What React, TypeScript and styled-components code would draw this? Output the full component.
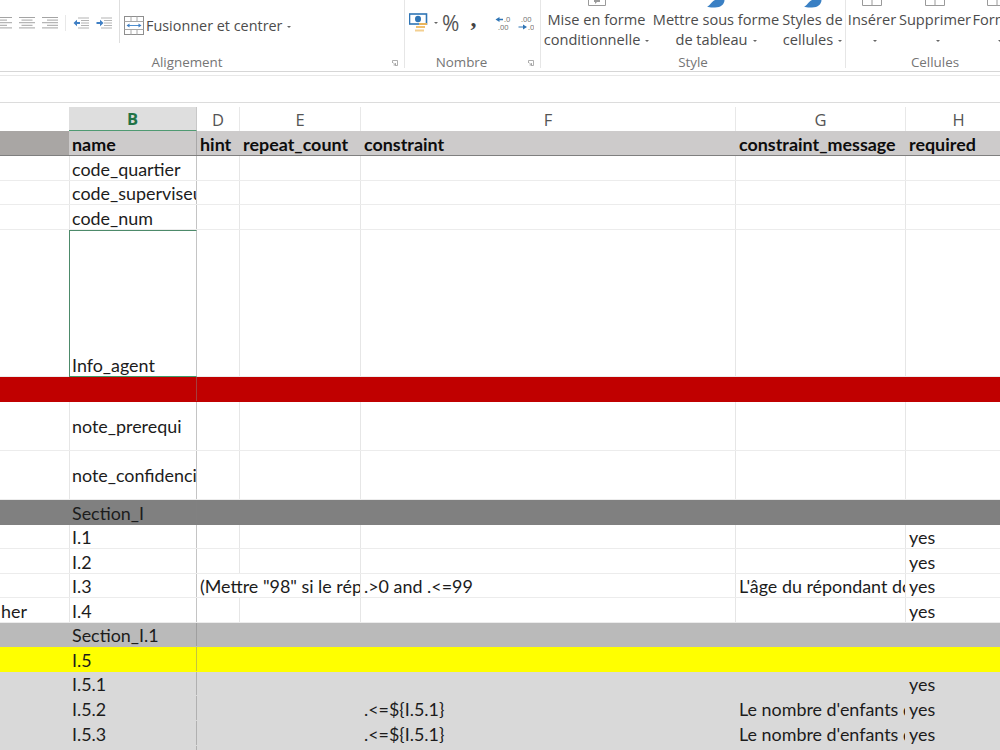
import React from "react"
import styled, { createGlobalStyle } from "styled-components"

const GlobalStyle = createGlobalStyle`
  html, body {
    margin: 0;
    padding: 0;
    background: #fff;
    overflow: hidden;
  }
`

const Page = styled.div`
  width: 1000px;
  height: 750px;
  overflow: hidden;
  background: #fff;
  display: flex;
  flex-direction: column;
`

const Ribbon = styled.div`
  height: 71px;
  flex: none;
  display: flex;
  border-bottom: 1px solid #d6d6d6;
  font-family: "Open Sans", sans-serif;
  color: #4c4c4c;
  overflow: hidden;
`

const Group = styled.div<{ $w: number; $last?: boolean }>`
  width: ${(p) => p.$w}px;
  flex: none;
  height: 68px;
  display: flex;
  flex-direction: column;
  box-sizing: border-box;
  border-right: ${(p) => (p.$last ? "none" : "1px solid #e6e6e6")};
`

const GroupBody = styled.div`
  height: 52px;
  flex: none;
  display: flex;
  align-items: flex-start;
  overflow: hidden;
`

const GroupLabel = styled.div<{ $inset?: number }>`
  height: 18px;
  line-height: 18px;
  margin-top: 1px;
  padding-right: ${(p) => p.$inset ?? 0}px;
  font-size: 13.4px;
  color: #757575;
  text-align: center;
  position: relative;
`

const Launcher = styled.svg`
  position: absolute;
  right: 6px;
  top: 7px;
  width: 6px;
  height: 6px;
`

const IconRow = styled.div<{ $pad: number; $gap: number }>`
  display: flex;
  align-items: center;
  gap: ${(p) => p.$gap}px;
  margin-left: ${(p) => p.$pad}px;
  height: 46px;
`

const Divider = styled.div`
  width: 1px;
  height: 16px;
  background: #e8e8e8;
`

const TallDivider = styled.div`
  width: 1px;
  height: 43px;
  background: #dedede;
  margin-left: 7px;
`

const MergeButton = styled.div`
  display: flex;
  align-items: center;
  gap: 2px;
  height: 50px;
  margin-left: 4px;
  font-size: 14.4px;
  color: #4c4c4c;
  white-space: nowrap;
`

const Caret = styled.span`
  display: inline-block;
  width: 0;
  height: 0;
  margin-left: 5px;
  vertical-align: middle;
  border-left: 2px solid transparent;
  border-right: 2px solid transparent;
  border-top: 2px solid #666;
`

const Percent = styled.span`
  font-size: 21px;
  color: #555;
  line-height: 1;
  margin-left: 4px;
`

const Comma = styled.span`
  font-family: "Liberation Serif", serif;
  font-weight: 700;
  font-size: 24px;
  color: #444;
  line-height: 1;
  margin-top: -10px;
  margin-left: 11px;
`

const Spacer = styled.span<{ $w: number }>`
  width: ${(p) => p.$w}px;
`

const RibbonButton = styled.div<{ $w: number }>`
  width: ${(p) => p.$w}px;
  flex: none;
  position: relative;
  padding-top: 9px;
  text-align: center;
  font-size: 14.6px;
  line-height: 20px;
  white-space: nowrap;
  color: #4c4c4c;
`

const ButtonTop = styled.svg`
  position: absolute;
  top: 0;
  left: 50%;
  transform: translateX(-50%);
  overflow: visible;
`

const FormulaBar = styled.div`
  height: 26px;
  flex: none;
  margin-top: 3px;
  border-top: 1px solid #e8e8e8;
  border-bottom: 1px solid #dcdcdc;
`

const Sheet = styled.div`
  flex: 1;
  font-family: Lato, "Open Sans", sans-serif;
  font-size: 17.9px;
  color: #1c1c1c;
  overflow: hidden;
`

const COLUMNS = "69px 128px 43px 121px 375px 170px 106px"

const ColumnHeaders = styled.div`
  display: grid;
  grid-template-columns: ${COLUMNS};
  height: 24px;
  padding-top: 4px;
  font-family: "Open Sans", sans-serif;
  font-size: 16.5px;
  color: #555;
`

const ColumnHead = styled.div<{ $active?: boolean; $blank?: boolean }>`
  display: flex;
  align-items: center;
  justify-content: center;
  box-sizing: border-box;
  border-right: 1px solid ${(p) => (p.$blank ? "transparent" : p.$active ? "#c8c8c8" : "#e8e8e8")};
  background: ${(p) => (p.$active ? "#dedede" : "transparent")};
  border-bottom: ${(p) => (p.$active ? "1.5px solid #4f9a72" : "none")};
  color: ${(p) => (p.$active ? "#217346" : "#555")};
  font-weight: ${(p) => (p.$active ? 700 : 400)};
`

const Row = styled.div<{ $h: number; $fill?: string; $line?: string }>`
  display: grid;
  grid-template-columns: ${COLUMNS};
  height: ${(p) => p.$h}px;
  box-sizing: border-box;
  background: ${(p) => p.$fill ?? "#fff"};
  border-bottom: 1px solid ${(p) => p.$line ?? "#ececec"};
`

const Cell = styled.div<{ $sep?: string; $span?: number }>`
  box-sizing: border-box;
  min-width: 0;
  overflow: hidden;
  white-space: nowrap;
  padding: 0 0 1px 3px;
  display: flex;
  align-items: flex-end;
  line-height: 20px;
  border-right: 1px solid ${(p) => p.$sep ?? "transparent"};
  ${(p) => (p.$span ? `grid-column: span ${p.$span};` : "")}
`

const LeadCell = styled(Cell)<{ $fill?: string }>`
  padding-left: 1px;
  background: ${(p) => p.$fill ?? "transparent"};
`

const NameCell = styled(Cell)<{ $leftLine: string; $selected?: boolean; $middle?: boolean }>`
  padding-left: 2px;
  border-left: 1px solid ${(p) => (p.$selected ? "#4d8a6a" : p.$leftLine)};
  align-items: ${(p) => (p.$middle ? "center" : "flex-end")};
  ${(p) =>
    p.$selected
      ? `
    border-top: 1px solid #4d8a6a;
    border-bottom: 1px solid #3f9a6a;
    margin-bottom: -1px;
  `
      : ""}
`

const HeaderText = styled.span`
  font-weight: 700;
  color: #0d0d0d;
`

type RowDef = {
  h: number
  fill?: string
  line?: string
  grid?: boolean
  bold?: boolean
  middle?: boolean
  a?: string
  b?: string
  d?: string
  spanHint?: boolean
  e?: string
  f?: string
  g?: string
  hh?: string
  selected?: boolean
  aFill?: string
}

const plain = { grid: true }
const LIGHT = "#d9d9d9"
const COLUMN_B_EDGE = "rgba(130, 130, 130, 0.47)"

const rows: RowDef[] = [
  { h: 25, fill: "#cdcbcb", line: "#7f7f7f", bold: true, aFill: "#a9a6a4", b: "name", d: "hint", e: "repeat_count", f: "constraint", g: "constraint_message", hh: "required" },
  { h: 25, ...plain, b: "code_quartier" },
  { h: 24, ...plain, b: "code_superviseu" },
  { h: 25, ...plain, b: "code_num" },
  { h: 147, ...plain, b: "Info_agent", selected: true },
  { h: 25, fill: "#c00000", line: "#c00000" },
  { h: 49, ...plain, middle: true, b: "note_prerequi" },
  { h: 49, ...plain, middle: true, b: "note_confidenci" },
  { h: 25, fill: "#808080", line: "#808080", b: "Section_I" },
  { h: 24, ...plain, b: "I.1", hh: "yes" },
  { h: 25, ...plain, b: "I.2", hh: "yes" },
  { h: 24, ...plain, b: "I.3", d: '(Mettre "98" si le rép', spanHint: true, f: ".>0 and .<=99", g: "L'âge du répondant do", hh: "yes" },
  { h: 25, ...plain, a: "her", b: "I.4", hh: "yes" },
  { h: 24, fill: "#bababa", line: "#bababa", b: "Section_I.1" },
  { h: 25, fill: "#ffff00", line: "#ffff00", b: "I.5" },
  { h: 24, fill: LIGHT, line: LIGHT, b: "I.5.1", hh: "yes" },
  { h: 25, fill: LIGHT, line: LIGHT, b: "I.5.2", f: ".<=${I.5.1}", g: "Le nombre d'enfants d", hh: "yes" },
  { h: 25, fill: LIGHT, line: LIGHT, b: "I.5.3", f: ".<=${I.5.1}", g: "Le nombre d'enfants d", hh: "yes" },
  { h: 8, fill: LIGHT, line: LIGHT },
]

const AlignIcon = ({ align }: { align: "left" | "center" | "right" }) => {
  const lines = [16, 11, 16, 11, 16]
  return (
    <svg width="16" height="14" viewBox="0 0 16 14">
      {lines.map((w, i) => {
        const x = align === "left" ? 0 : align === "right" ? 16 - w : (16 - w) / 2
        return <rect key={i} x={x} y={1 + i * 2.6} width={w} height="1" fill="#a4a4a4" />
      })}
    </svg>
  )
}

const IndentIcon = ({ out }: { out?: boolean }) => (
  <svg width="16" height="12" viewBox="0 0 16 12">
    {[1, 3.5, 6, 8.5, 11].map((y, i) => (
      <rect key={i} x={i === 0 || i === 4 ? 5 : 8} y={y - 0.5} width={i === 0 || i === 4 ? 11 : 8} height="1" fill="#b4b4b4" />
    ))}
    {out ? (
      <path d="M0.5 6 L4 2.8 V5 H7 V7 H4 V9.2 Z" fill="#3f7fc4" />
    ) : (
      <path d="M7.5 6 L4 2.8 V5 H0.5 V7 H4 V9.2 Z" fill="#3f7fc4" />
    )}
  </svg>
)

const MergeIcon = () => (
  <svg width="20" height="19" viewBox="0 0 20 19">
    <rect x="0.5" y="0.5" width="19" height="18" fill="#fff" stroke="#8e8e8e" />
    <path d="M0.5 5.5 H19.5 M0.5 13.5 H19.5 M7 0.5 V5.5 M13 0.5 V5.5 M7 13.5 V18.5 M13 13.5 V18.5" stroke="#a8a8a8" />
    <path d="M3 9.5 H17" stroke="#4f8fd0" />
    <path d="M5.5 7.5 L2.5 9.5 L5.5 11.5 Z M14.5 7.5 L17.5 9.5 L14.5 11.5 Z" fill="#3f7fc4" />
  </svg>
)

const CurrencyIcon = () => (
  <svg width="20" height="20" viewBox="0 0 20 20">
    <rect x="0.5" y="1" width="17" height="10" fill="#fff" stroke="#2f75b5" strokeWidth="1.6" />
    <ellipse cx="9" cy="6" rx="3" ry="3.2" fill="#2f75b5" />
    <rect x="10" y="10" width="8" height="2" fill="#e8b45c" />
    <rect x="7" y="13" width="9" height="2" fill="#f0c070" />
    <rect x="6" y="16.5" width="9" height="2" fill="#f3cf90" />
  </svg>
)

const DecimalIcon = ({ more }: { more?: boolean }) => (
  <svg width="16" height="16" viewBox="0 0 16 16">
    {more ? (
      <>
        <text x="3" y="6.5" fontSize="7.5" fill="#707070" fontFamily="Open Sans">.00</text>
        <path d="M0.5 11.5 H5 V9.5 L9 12 L5 14.5 V12.5 H0.5 Z" fill="#2f75b5" />
        <text x="10" y="15" fontSize="7.5" fill="#707070" fontFamily="Open Sans">.0</text>
      </>
    ) : (
      <>
        <path d="M0.5 4.5 L4.5 2 V3.8 H8 V5.2 H4.5 V7 Z" fill="#2f75b5" />
        <text x="9" y="7" fontSize="7.5" fill="#707070" fontFamily="Open Sans">.0</text>
        <text x="3" y="15" fontSize="7.5" fill="#707070" fontFamily="Open Sans">.00</text>
      </>
    )}
  </svg>
)

const LauncherIcon = () => (
  <Launcher viewBox="0 0 6 6">
    <path d="M0.5 3 V0.5 H5.5 V5.5 H3" fill="none" stroke="#9a9a9a" strokeWidth="0.8" />
    <path d="M1 2.5 L3.5 5 M3.5 3 V5 H1.5" fill="none" stroke="#9a9a9a" strokeWidth="0.8" />
  </Launcher>
)

const BrushTop = () => (
  <ButtonTop width="18" height="8" viewBox="0 0 18 8">
    <path d="M0 6.5 C3 6 4 2 8 0 H17.5 C17.5 4 14 7.5 8 7.5 C5 7.8 2 7.5 0 6.5 Z" fill="#3a80c4" />
  </ButtonTop>
)

const BoxTop = () => (
  <ButtonTop width="20" height="6" viewBox="0 0 20 6">
    <path d="M0.5 0 V5.5 H19.5 V0 M10 0 V5.5" fill="none" stroke="#9a9a9a" />
  </ButtonTop>
)

const CondTop = () => (
  <ButtonTop width="18" height="6" viewBox="0 0 18 6">
    <path d="M0.5 0 V5.5 H17.5 V0" fill="none" stroke="#9a9a9a" />
    <path d="M6 0 H12 V2 H9 L7 4 V2 H6 Z" fill="#9a9a9a" />
  </ButtonTop>
)

const SheetRow = ({ row }: { row: RowDef }) => {
  const sep = row.grid ? "#e6e6e6" : "transparent"
  const Text = row.bold ? HeaderText : React.Fragment
  return (
    <Row $h={row.h} $fill={row.fill} $line={row.line}>
      <LeadCell $fill={row.aFill}>{row.a}</LeadCell>
      <NameCell $leftLine={sep} $sep={COLUMN_B_EDGE} $selected={row.selected} $middle={row.middle}>
        <Text>{row.b}</Text>
      </NameCell>
      <Cell $sep={sep} $span={row.spanHint ? 2 : undefined}>
        <Text>{row.d}</Text>
      </Cell>
      {!row.spanHint && (
        <Cell $sep={sep}>
          <Text>{row.e}</Text>
        </Cell>
      )}
      <Cell $sep={sep}>
        <Text>{row.f}</Text>
      </Cell>
      <Cell $sep={sep}>
        <Text>{row.g}</Text>
      </Cell>
      <Cell>
        <Text>{row.hh}</Text>
      </Cell>
    </Row>
  )
}

export default function App() {
  return (
    <Page>
      <GlobalStyle />
      <Ribbon>
        <Group $w={405}>
          <GroupBody>
            <IconRow $pad={-4} $gap={7}>
              <AlignIcon align="left" />
              <AlignIcon align="center" />
              <AlignIcon align="right" />
              <Divider />
              <IndentIcon out />
              <IndentIcon />
            </IconRow>
            <TallDivider />
            <MergeButton>
              <MergeIcon />
              <span>
                Fusionner et centrer
                <Caret />
              </span>
            </MergeButton>
          </GroupBody>
          <GroupLabel $inset={30}>
            Alignement
            <LauncherIcon />
          </GroupLabel>
        </Group>
        <Group $w={136}>
          <GroupBody>
            <IconRow $pad={4} $gap={0}>
              <CurrencyIcon />
              <Caret />
              <Percent>%</Percent>
              <Comma>,</Comma>
              <Spacer $w={19} />
              <DecimalIcon />
              <Spacer $w={7} />
              <DecimalIcon more />
            </IconRow>
          </GroupBody>
          <GroupLabel $inset={22}>
            Nombre
            <LauncherIcon />
          </GroupLabel>
        </Group>
        <Group $w={305}>
          <GroupBody>
            <RibbonButton $w={111}>
              <CondTop />
              Mise en forme
              <br />
              conditionnelle
              <Caret />
            </RibbonButton>
            <RibbonButton $w={128}>
              <BrushTop />
              Mettre sous forme
              <br />
              de tableau
              <Caret />
            </RibbonButton>
            <RibbonButton $w={65}>
              <BrushTop />
              Styles de
              <br />
              cellules
              <Caret />
            </RibbonButton>
          </GroupBody>
          <GroupLabel>Style</GroupLabel>
        </Group>
        <Group $w={178} $last>
          <GroupBody>
            <RibbonButton $w={52}>
              <BoxTop />
              Insérer
              <br />
              <Caret />
            </RibbonButton>
            <RibbonButton $w={74}>
              <BoxTop />
              Supprimer
              <br />
              <Caret />
            </RibbonButton>
            <RibbonButton $w={50}>
              <BoxTop />
              Format
              <br />
              <Caret />
            </RibbonButton>
          </GroupBody>
          <GroupLabel>Cellules</GroupLabel>
        </Group>
      </Ribbon>
      <FormulaBar />
      <Sheet>
        <ColumnHeaders>
          <ColumnHead $blank />
          <ColumnHead $active>B</ColumnHead>
          <ColumnHead>D</ColumnHead>
          <ColumnHead>E</ColumnHead>
          <ColumnHead>F</ColumnHead>
          <ColumnHead>G</ColumnHead>
          <ColumnHead>H</ColumnHead>
        </ColumnHeaders>
        {rows.map((row, i) => (
          <SheetRow key={i} row={row} />
        ))}
      </Sheet>
    </Page>
  )
}
